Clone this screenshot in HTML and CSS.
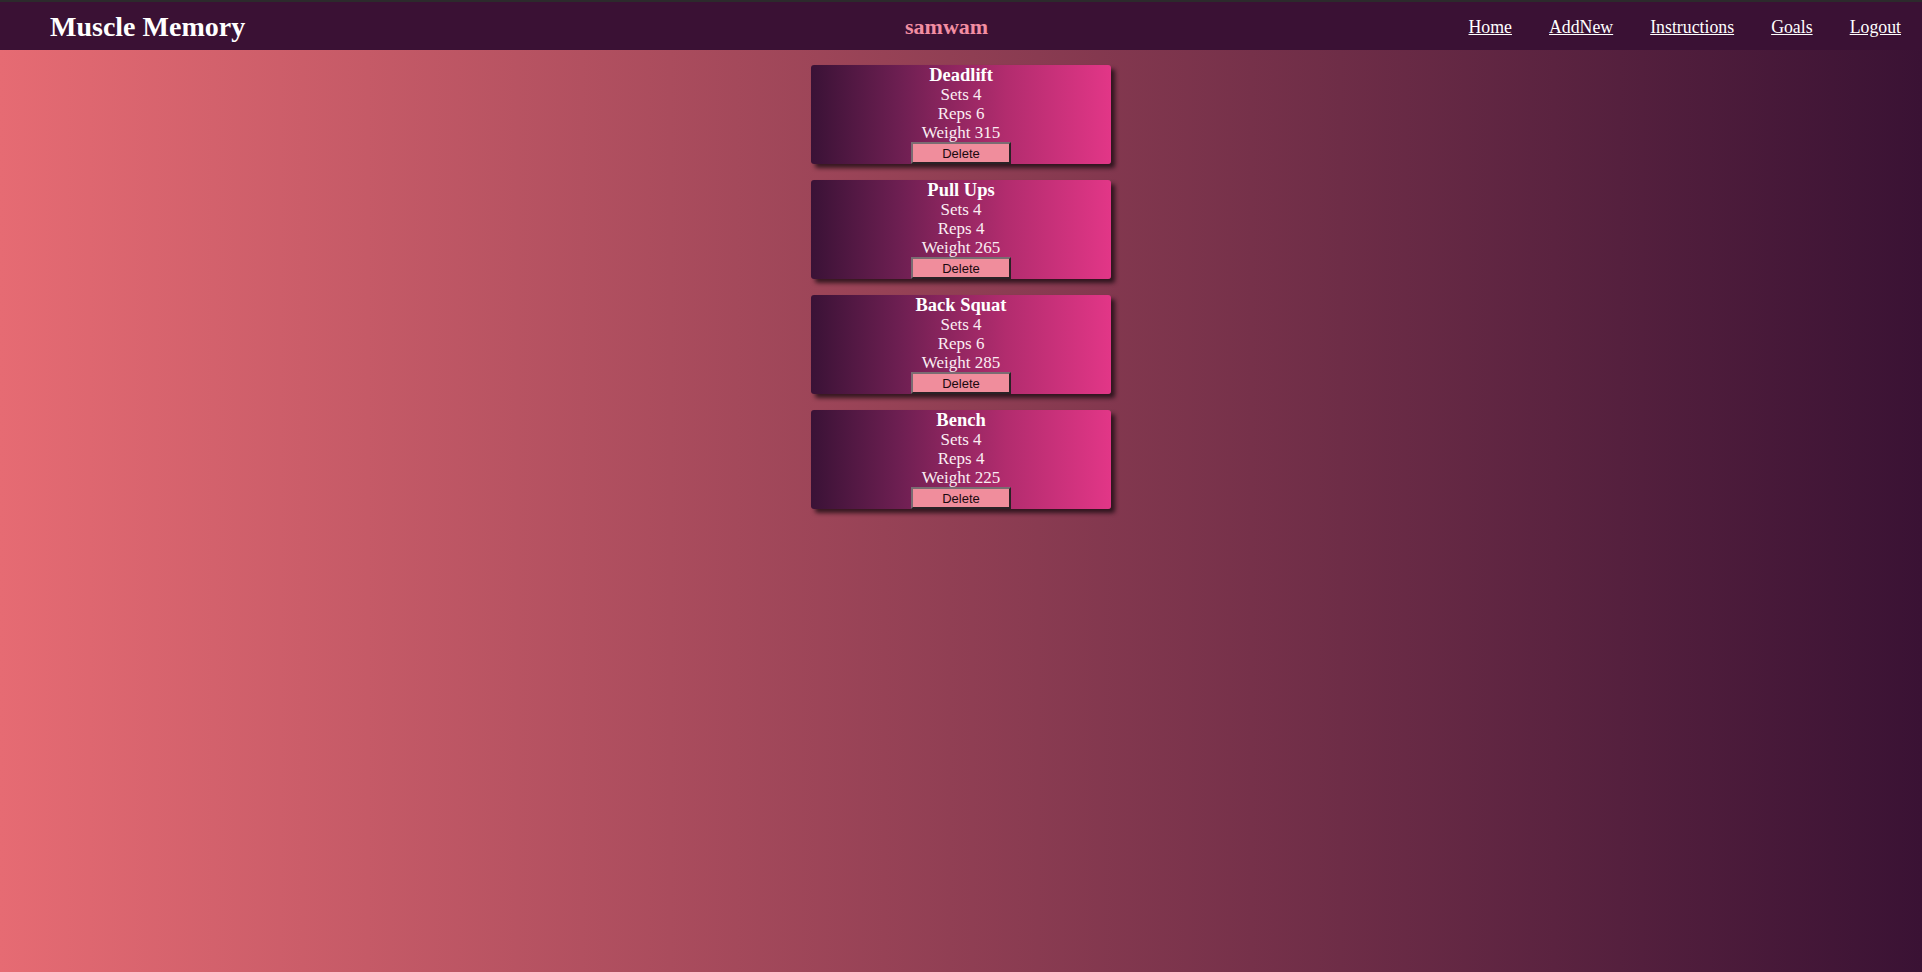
FILE: index.html
```html
<!DOCTYPE html>
<html lang="en">
<head>
<meta charset="utf-8">
<title>Muscle Memory</title>
<link rel="stylesheet" href="styles.css">
</head>
<body>
<header class="topbar">
  <h1 class="brand">Muscle Memory</h1>
  <span class="user">samwam</span>
  <nav class="nav">
    <a href="#">Home</a>
    <a href="#">AddNew</a>
    <a href="#">Instructions</a>
    <a href="#">Goals</a>
    <a href="#">Logout</a>
  </nav>
</header>
<main class="list">
  <div class="card">
    <div class="card-title">Deadlift</div>
    <div class="card-line">Sets 4</div>
    <div class="card-line">Reps 6</div>
    <div class="card-line">Weight 315</div>
    <button class="del">Delete</button>
  </div>
  <div class="card">
    <div class="card-title">Pull Ups</div>
    <div class="card-line">Sets 4</div>
    <div class="card-line">Reps 4</div>
    <div class="card-line">Weight 265</div>
    <button class="del">Delete</button>
  </div>
  <div class="card">
    <div class="card-title">Back Squat</div>
    <div class="card-line">Sets 4</div>
    <div class="card-line">Reps 6</div>
    <div class="card-line">Weight 285</div>
    <button class="del">Delete</button>
  </div>
  <div class="card">
    <div class="card-title">Bench</div>
    <div class="card-line">Sets 4</div>
    <div class="card-line">Reps 4</div>
    <div class="card-line">Weight 225</div>
    <button class="del">Delete</button>
  </div>
</main>
</body>
</html>
```
FILE: styles.css
```css
html, body {
  margin: 0;
  padding: 0;
  height: 100%;
}
body {
  font-family: "Liberation Serif", "Times New Roman", serif;
  background: linear-gradient(to right, #e66b73 0%, #3a1234 100%);
  color: #fff;
}
.topbar {
  display: flex;
  align-items: center;
  height: 48px;
  border-top: 2px solid #2c2a2c;
  background: #3a1134;
  padding: 0 21px 0 50px;
}
.brand {
  margin: 0;
  font-size: 28px;
  font-weight: bold;
  color: #fff;
  width: 198px;
  white-space: nowrap;
  position: relative;
  top: 1px;
}
.user {
  margin-left: 657px;
  font-size: 22px;
  font-weight: bold;
  color: #f28ea2;
  position: relative;
  top: 1px;
}
.nav {
  margin-left: auto;
  display: flex;
  gap: 37px;
  position: relative;
  top: 1px;
}
.nav a {
  color: #fff;
  font-size: 17.8px;
  text-decoration: underline;
}
.list {
  display: flex;
  flex-direction: column;
  align-items: center;
  gap: 16px;
  padding-top: 15px;
}
.card {
  width: 300px;
  display: flex;
  flex-direction: column;
  align-items: center;
  border-radius: 3px;
  background: linear-gradient(to right, #3a1236 0%, #6e1f52 30%, #b22c6e 65%, #e23687 100%);
  box-shadow: 4px 4px 4px rgba(20, 10, 15, 0.75);
  color: #fbeef3;
}
.card-title {
  font-size: 18.5px;
  font-weight: bold;
  line-height: 20px;
  color: #fff;
}
.card-line {
  font-size: 17px;
  line-height: 19px;
}
.del {
  width: 100px;
  height: 22px;
  margin: 0;
  padding: 0;
  font-family: "Liberation Sans", Arial, sans-serif;
  font-size: 13px;
  color: #1a0a10;
  background: #f08d9c;
  border: 2px solid;
  border-color: #7a6c72 #2a2226 #2a2226 #7a6c72;
}
```
